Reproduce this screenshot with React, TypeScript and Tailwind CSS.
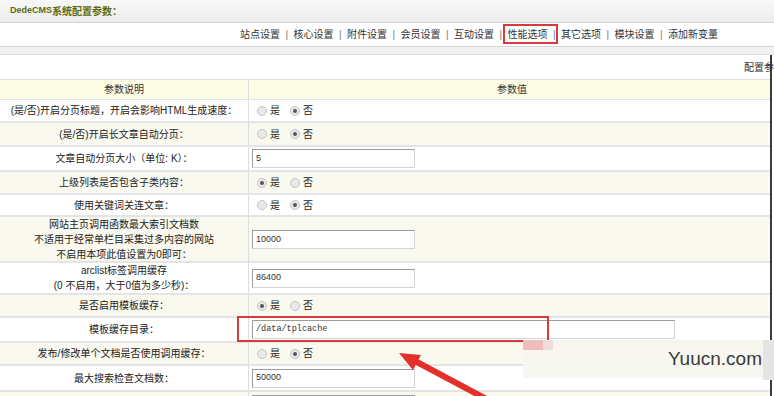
import React from 'react';

type Row = {
  label: string[];
  h: string;
  bg: string;
  kind: 'radio' | 'input' | 'wide';
  value?: string;
  yes?: boolean;
};

const rows: Row[] = [
  { label: ['(是/否)开启分页标题，开启会影响HTML生成速度：'], h: 'h-[23px]', bg: 'bg-white', kind: 'radio', yes: false },
  { label: ['(是/否)开启长文章自动分页：'], h: 'h-[24px]', bg: 'bg-[#f9f9ef]', kind: 'radio', yes: false },
  { label: ['文章自动分页大小（单位: K）：'], h: 'h-[25px]', bg: 'bg-white', kind: 'input', value: '5' },
  { label: ['上级列表是否包含子类内容：'], h: 'h-[23px]', bg: 'bg-[#f9f9ef]', kind: 'radio', yes: true },
  { label: ['使用关键词关连文章：'], h: 'h-[22px]', bg: 'bg-white', kind: 'radio', yes: false },
  {
    label: ['网站主页调用函数最大索引文档数', '不适用于经常单栏目采集过多内容的网站', '不启用本项此值设置为0即可：'],
    h: 'h-[46px]',
    bg: 'bg-[#f9f9ef]',
    kind: 'input',
    value: '10000',
  },
  { label: ['arclist标签调用缓存', '(0 不启用，大于0值为多少秒)：'], h: 'h-[32px]', bg: 'bg-white', kind: 'input', value: '86400' },
  { label: ['是否启用模板缓存：'], h: 'h-[23px]', bg: 'bg-[#f9f9ef]', kind: 'radio', yes: true },
  { label: ['模板缓存目录：'], h: 'h-[25px]', bg: 'bg-white', kind: 'wide', value: '/data/tplcache' },
  { label: ['发布/修改单个文档是否使用调用缓存：'], h: 'h-[23px]', bg: 'bg-[#f9f9ef]', kind: 'radio', yes: false },
  { label: ['最大搜索检查文档数：'], h: 'h-[26px]', bg: 'bg-white', kind: 'input', value: '50000' },
];

const navItems = ['站点设置', '核心设置', '附件设置', '会员设置', '互动设置', '性能选项', '其它选项', '模块设置', '添加新变量'];

const Radio = ({ checked }: { checked: boolean }) => (
  <span className="flex h-[10px] w-[10px] items-center justify-center rounded-full border border-[#c4c4c4] bg-[#e9e9e9]">
    {checked && <span className="h-[4px] w-[4px] rounded-full bg-[#555]" />}
  </span>
);

const TextInput = ({ value, wide }: { value: string; wide?: boolean }) => (
  <div
    className={`ml-[3px] flex h-[19px] items-center border border-t-[#9c9c9c] border-l-[#9c9c9c] border-r-[#d4d4d4] border-b-[#d4d4d4] bg-white pl-[3px] text-[#333] ${
      wide ? "w-[423px] font-['Liberation_Mono',monospace] text-[8.5px]" : 'w-[163px] text-[9px]'
    }`}
  >
    {value}
  </div>
);

export default function App() {
  return (
    <div className="relative h-[396px] w-[774px] overflow-hidden bg-white font-['Liberation_Sans','Noto_Sans_CJK_SC',sans-serif] text-[10px] text-[#222]">
      {/* title bar */}
      <div className="flex h-[23px] items-center border-b border-[#d2d2d2] bg-gradient-to-b from-[#f8f8f8] to-[#ececec] pl-[10px] font-bold text-[#5d6a0c]">
        <span className="text-[9px]">DedeCMS</span>
        <span>系统配置参数：</span>
      </div>

      {/* nav */}
      <div className="flex h-[24px] items-center border-b border-[#d6d6d6] pl-[240px] text-[#333]">
        {navItems.map((item, i) => (
          <React.Fragment key={item}>
            <span className="whitespace-nowrap">{item}</span>
            {i < navItems.length - 1 && <span className="w-[13.5px] text-center text-[#777]">|</span>}
          </React.Fragment>
        ))}
      </div>

      <div className="h-[8px] border-b border-[#dcdcdc] bg-[#f1f1f1]" />

      {/* table */}
      <div className="w-[772px] border-r-2 border-[#3c3c3c]">
        <div className="flex h-[25px] items-center whitespace-nowrap border-b border-[#dedede] pl-[744px] text-[#333]">配置参</div>

        <div className="grid h-[20px] grid-cols-[249px_1fr] border-b border-[#e2e2e2] bg-[#fcfbe3] text-[#333]">
          <div className="flex items-center justify-center border-r border-[#dedede]">参数说明</div>
          <div className="flex items-center justify-center pl-[5px]">参数值</div>
        </div>

        {rows.map((r, i) => (
          <div key={i} className={`grid grid-cols-[249px_1fr] border-b-2 border-[#e4e4e4] ${r.h} ${r.bg}`}>
            <div className="flex flex-col items-center justify-center border-r border-[#dedede] leading-[15px]">
              {r.label.map((l) => (
                <div key={l} className="whitespace-nowrap">{l}</div>
              ))}
            </div>
            <div className="flex items-center">
              {r.kind === 'radio' ? (
                <div className="flex items-center pl-[8px]">
                  <Radio checked={!!r.yes} />
                  <span className="ml-[3px]">是</span>
                  <span className="ml-[10px]">
                    <Radio checked={!r.yes} />
                  </span>
                  <span className="ml-[3px]">否</span>
                </div>
              ) : (
                <TextInput value={r.value ?? ''} wide={r.kind === 'wide'} />
              )}
            </div>
          </div>
        ))}

        <div className="grid h-[20px] grid-cols-[249px_1fr] bg-[#f9f9ef]">
          <div className="border-r border-[#dedede]" />
          <div className="pt-[3px]">
            <div className="ml-[3px] h-[19px] w-[163px] border border-[#9c9c9c] bg-white" />
          </div>
        </div>
      </div>

      {/* annotations */}
      <div className="absolute left-[503px] top-[24px] h-[20px] w-[55px] border-2 border-[#d63b3b]" />
      <div className="absolute left-[237px] top-[316px] h-[26px] w-[312px] border-2 border-[#d63b3b]" />

      <div className="absolute left-[523px] top-[340px] flex h-[38px] w-[240px] items-center justify-end bg-[#f6f6f0]/90 pr-[1px] text-[19px] text-[#3a3a3a]">
        Yuucn.com
      </div>
      <div className="absolute left-[523px] top-[340px] h-[10px] w-[20px] bg-[#efbdbd]" />
      <div className="absolute left-[543px] top-[340px] h-[10px] w-[10px] bg-[#f2dcdc]" />
      <div className="absolute left-[763px] top-[340px] h-[40px] w-[11px] bg-[#e4e4e4]" />

      <svg className="pointer-events-none absolute left-0 top-0" width="774" height="396" viewBox="0 0 774 396">
        <line x1="415" y1="361" x2="492" y2="402" stroke="#e3302a" strokeWidth="6" />
        <polygon points="399,353 421,355 413,370" fill="#e3302a" />
      </svg>
    </div>
  );
}
